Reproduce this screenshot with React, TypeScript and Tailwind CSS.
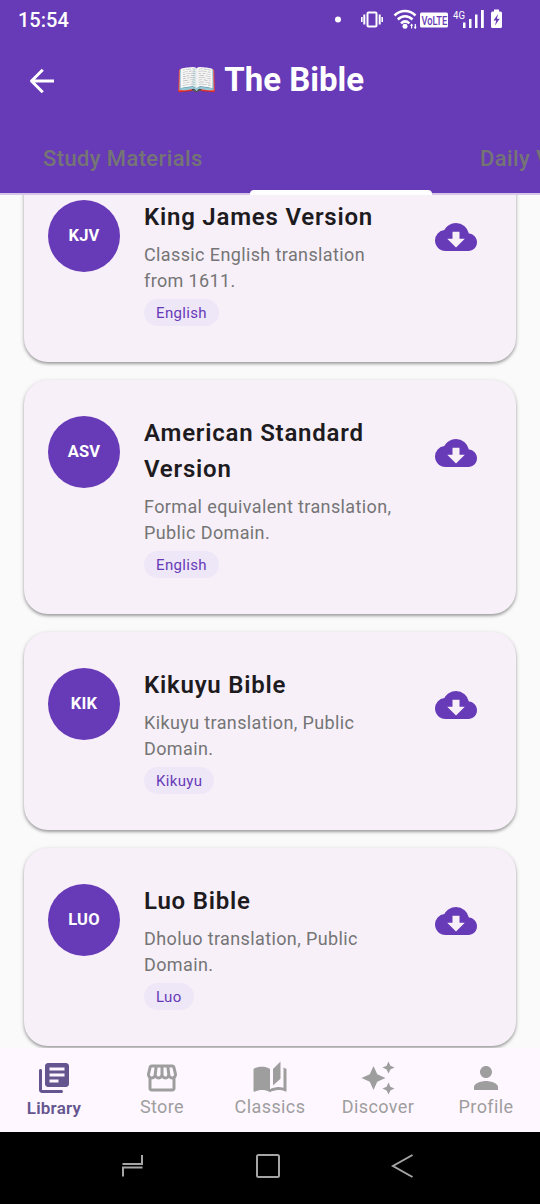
import {
  MdAutoAwesome,
  MdAutoStories,
  MdCloudDownload,
  MdOutlineStorefront,
  MdPerson,
} from "react-icons/md";

const bibles = [
  { code: "KJV", title: "King James Version", text: "Classic English translation from 1611.", lang: "English" },
  { code: "ASV", title: "American Standard Version", text: "Formal equivalent translation, Public Domain.", lang: "English" },
  { code: "KIK", title: "Kikuyu Bible", text: "Kikuyu translation, Public Domain.", lang: "Kikuyu" },
  { code: "LUO", title: "Luo Bible", text: "Dholuo translation, Public Domain.", lang: "Luo" },
];

function LibraryIcon({ className }: { className?: string }) {
  return (
    <svg className={className} viewBox="0 0 24 24" fill="currentColor">
      <path d="M3 6c-.55 0-1 .45-1 1v13c0 1.100.9 2 2 2h13c.55 0 1-.45 1-1s-.45-1-1-1H4V7c0-.55-.45-1-1-1z" />
      <path d="M20 2H8c-1.100 0-2 .9-2 2v12c0 1.100.9 2 2 2h12c1.100 0 2-.9 2-2V4c0-1.100-.9-2-2-2zm-1 9H9V9h10v2zm-4 4H9v-2h6v2zm4-8H9V5h10v2z" />
    </svg>
  );
}

const navItems = [
  { label: "Library", Icon: LibraryIcon, active: true },
  { label: "Store", Icon: MdOutlineStorefront },
  { label: "Classics", Icon: MdAutoStories },
  { label: "Discover", Icon: MdAutoAwesome },
  { label: "Profile", Icon: MdPerson },
];

function StatusBar() {
  return (
    <div className="flex h-10 items-center justify-between pl-[18px] pr-[37px] text-white">
      <span className="text-[20px] font-medium leading-none">15:54</span>
      <svg className="h-10 w-[170px]" viewBox="333 0 170 40" fill="#fff">
        <circle cx="338" cy="19.5" r="3" />
        <g fill="none" stroke="#fff" strokeWidth="2">
          <rect x="367.500" y="12.500" width="9" height="14" rx="1" />
          <path d="M364.300 14.500v10M379.700 14.500v10" />
          <path d="M361.800 17v5M382.200 17v5" strokeWidth="1.600" />
          <path d="M394.500 15.500c6-6 15-6 21 0M397.800 19.500c4.300-4.200 10.400-4.200 14.700 0M401 23.300c2.600-2.400 5.800-2.400 8.400 0" strokeWidth="2.500" />
        </g>
        <circle cx="405" cy="26.300" r="2.500" />
        <path d="M411.600 24v4.500M415.300 24v4.500" stroke="#fff" strokeWidth="1.200" />
        <path d="M410 25.800l1.600-2.300 1.400 2.300zM413.700 26.800l1.600 2.300 1.400-2.300z" />
        <rect x="420" y="12.500" width="28" height="15" rx="1.500" />
        <text transform="translate(421.500 24.500) scale(.74 1)" fontSize="12.500" fontWeight="500" className="fill-[#673ab7]">VoLTE</text>
        <text transform="translate(453 18.500) scale(.84 1)" fontSize="11.500">4G</text>
        <rect x="463" y="22.500" width="2.500" height="5.500" />
        <rect x="469" y="19" width="2.500" height="9" />
        <rect x="475" y="14.500" width="2.500" height="13.500" />
        <rect x="481" y="10" width="2.800" height="18" />
        <path d="M494 9.500h5v2h1.500q1.500 0 1.500 1.500v13.500q0 1.500-1.500 1.500h-8q-1.500 0-1.500-1.500V13q0-1.500 1.500-1.500h1.500z" />
        <path d="M498 14l-4.500 6.500h2.700l-1.200 5 4.700-6.800h-2.800z" className="fill-[#673ab7]" />
      </svg>
    </div>
  );
}

function Header() {
  return (
    <header className="h-[195px] shrink-0 bg-[#673ab7]">
      <StatusBar />
      <div className="grid h-20 grid-cols-[84px_1fr_84px] items-center">
        <svg className="ml-6 mt-px size-9" viewBox="0 0 24 24" fill="none" stroke="#fff" strokeWidth="2" strokeLinejoin="round">
          <path d="M12.500 4.500l-7.500 7.500 7.500 7.500M5 12h15" />
        </svg>
        <h1 className="-mt-0.5 whitespace-nowrap text-center text-[33px] font-bold leading-none text-white">📖 The Bible</h1>
      </div>
      <div className="flex h-[75px] flex-col">
        <div className="flex flex-1 justify-between overflow-hidden pl-[43px] pt-[25px] text-[22px] font-medium leading-7 tracking-[0.380px] text-[#757575]">
          <span>Study Materials</span>
          <span className="w-[60px] whitespace-nowrap">Daily Verse</span>
        </div>
        <div className="flex h-[5px] items-end bg-linear-to-b from-[#673ab7] from-60% to-[#d6c6ea] to-60%">
          <div className="ml-[250px] h-[5px] w-[182px] rounded-t-[4px] bg-white" />
        </div>
      </div>
    </header>
  );
}

function BibleCard({ code, title, text, lang }: (typeof bibles)[number]) {
  return (
    <article className="flex rounded-3xl bg-[#f7f0f9] px-6 pb-[35.600px] pt-9 shadow-[0_2px_3px_rgba(0,0,0,0.3),0_1px_5px_rgba(0,0,0,0.12)]">
      <div className="flex size-[72px] shrink-0 items-center justify-center rounded-full bg-[#673ab7] text-[16.500px] font-bold tracking-[0.2px] text-white">
        {code}
      </div>
      <div className="-mt-px ml-6 w-[258px]">
        <h2 className="text-[24px] font-semibold leading-9 tracking-[0.780px] text-[#1d1b20]">{title}</h2>
        <p className="mt-[7px] text-[18px] leading-[25.700px] tracking-[0.380px] text-[#757575]">{text}</p>
        <span className="mt-[6px] flex h-[27px] w-fit items-center rounded-full bg-[#eee7f7] px-3 text-[15px] tracking-[0.350px] text-[#673ab7]">
          {lang}
        </span>
      </div>
      <MdCloudDownload className="ml-[33px] mt-4 size-[42px] shrink-0 text-[#673ab7]" />
    </article>
  );
}

function BottomNav() {
  return (
    <nav className="grid h-[84px] shrink-0 grid-cols-5 bg-[#fef7ff]">
      {navItems.map(({ label, Icon, active }) => (
        <div key={label} className={active ? "flex flex-col items-center pt-3 text-[#65558f]" : "flex flex-col items-center pt-3 text-[#9e9e9e]"}>
          <Icon className="size-9" />
          <span className={active ? "text-[17px] font-semibold leading-6 tracking-[0.250px]" : "text-[18px] leading-[22px] tracking-[0.400px]"}>
            {label}
          </span>
        </div>
      ))}
    </nav>
  );
}

function SystemNav() {
  return (
    <div className="h-[72px] shrink-0 bg-black">
      <svg className="size-full" viewBox="0 1132 540 72" fill="none" stroke="#a5a5a5" strokeWidth="2">
        <path d="M122.500 1164h19.500v-9M142.500 1167.500h-19.500v9" />
        <rect x="257" y="1155" width="22" height="22" rx="1.500" />
        <path d="M412.500 1155l-19.500 11 19.500 11" />
      </svg>
    </div>
  );
}

export default function App() {
  return (
    <div className="flex h-[1204px] w-[540px] flex-col overflow-hidden bg-[#fafafa] font-[Roboto,sans-serif]">
      <Header />
      <main className="min-h-0 flex-1 overflow-hidden px-6">
        <div className="-mt-[31px] flex flex-col gap-[18px]">
          {bibles.map((bible) => (
            <BibleCard key={bible.code} {...bible} />
          ))}
        </div>
      </main>
      <BottomNav />
      <SystemNav />
    </div>
  );
}
